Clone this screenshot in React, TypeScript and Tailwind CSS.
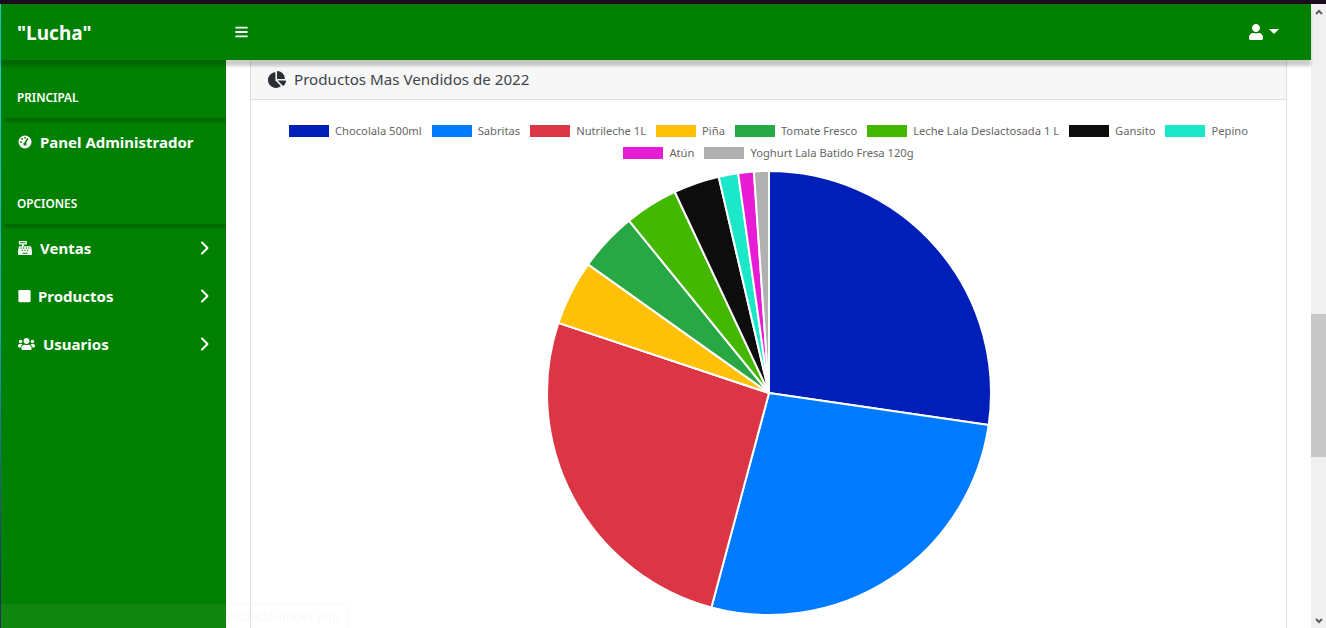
import { FaBars, FaCashRegister, FaChartPie, FaSquare, FaUser, FaUsers } from "react-icons/fa";

const slices = [
  { label: "Chocolala 500ml", color: "#001fb8", end: 98.26 },
  { label: "Sabritas", color: "#007bff", end: 195.04 },
  { label: "Nutrileche 1L", color: "#dc3545", end: 288.4 },
  { label: "Piña", color: "#ffc107", end: 305.4 },
  { label: "Tomate Fresco", color: "#28a745", end: 320.9 },
  { label: "Leche Lala Deslactosada 1 L", color: "#44b700", end: 334.9 },
  { label: "Gansito", color: "#0d0d0d", end: 346.9 },
  { label: "Pepino", color: "#1be7c9", end: 352 },
  { label: "Atún", color: "#e91cd6", end: 356.1 },
  { label: "Yoghurt Lala Batido Fresa 120g", color: "#b0b0b0", end: 360 },
];

const point = (deg: number, r: number, c: number) => {
  const a = (deg * Math.PI) / 180;
  return `${c + r * Math.sin(a)} ${c - r * Math.cos(a)}`;
};

function Pie() {
  const r = 222;
  const c = 223;
  let start = 0;
  return (
    <svg width="446" height="446" viewBox="0 0 446 446" className="block">
      {slices.map((s) => {
        const d = `M${c} ${c} L${point(start, r, c)} A${r} ${r} 0 ${s.end - start > 180 ? 1 : 0} 1 ${point(s.end, r, c)} Z`;
        start = s.end;
        return <path key={s.label} d={d} fill={s.color} stroke="#ffffff" strokeWidth="2" strokeLinejoin="round" />;
      })}
    </svg>
  );
}

function Legend({ item }: { item: (typeof slices)[number] }) {
  return (
    <div className="flex items-center gap-1.5">
      <span className="h-3 w-10 shrink-0" style={{ backgroundColor: item.color }} />
      <span className="text-[11.2px] leading-[22px] text-[#666666]">{item.label}</span>
    </div>
  );
}

function Heading({ children }: { children: string }) {
  return (
    <div className="ml-1 flex h-[58px] items-end pb-[13px] pl-[12px] text-[11.8px] font-semibold leading-[16px] text-white shadow-[0_4px_2px_rgba(0,0,0,0.18)]">
      {children}
    </div>
  );
}

function Gauge() {
  return (
    <svg width="14" height="14" viewBox="0 0 14 14" className="shrink-0">
      <circle cx="7" cy="7" r="6.5" fill="#ffffff" />
      <path d="M7 8.2 L9.8 3.4" stroke="#008000" strokeWidth="1.6" />
      <circle cx="3" cy="7" r="0.9" fill="#008000" />
      <circle cx="4.2" cy="4" r="0.9" fill="#008000" />
      <circle cx="7" cy="2.8" r="0.9" fill="#008000" />
      <circle cx="7" cy="9" r="1.6" fill="#008000" />
    </svg>
  );
}

function Chevron() {
  return (
    <svg width="10" height="14" viewBox="0 0 10 14" className="shrink-0">
      <path d="M2 1.5 L7.5 7 L2 12.5" fill="none" stroke="#ffffff" strokeWidth="2" strokeLinecap="round" strokeLinejoin="round" />
    </svg>
  );
}

function Item({ icon, label, gap, arrow = true }: { icon: React.ReactNode; label: string; gap: string; arrow?: boolean }) {
  return (
    <div className={`flex h-12 items-center pl-[17px] pr-[16px] text-[15px] font-bold text-white ${gap}`}>
      {icon}
      <span className="flex-1">{label}</span>
      {arrow && <Chevron />}
    </div>
  );
}

export default function App() {
  return (
    <div className="relative flex h-screen flex-col overflow-hidden bg-white font-['Noto_Sans','Open_Sans',sans-serif]">
      <div className="h-1 shrink-0 bg-[#1b0d1f]" />
      <div className="flex min-h-0 flex-1">
        <div className="w-px shrink-0 bg-gradient-to-b from-[#1fd0c8] via-[#1fa8b0] to-[#1a2050]" />
        <div className="flex min-w-0 flex-1 flex-col">
          <header className="z-10 flex h-14 shrink-0 items-center bg-[#008000] shadow-[0_6px_3px_rgba(0,0,0,0.2)]">
            <div className="w-[225px] pl-4 pt-[2px] text-[19px] font-bold text-white">"Lucha"</div>
            <FaBars className="ml-[9px] h-[14px] w-[13px] text-white" />
            <div className="ml-auto flex items-center gap-[5px] pr-[32px] text-white">
              <FaUser className="h-[16px] w-[16px]" />
              <span className="mb-[2px] h-0 w-0 border-x-[5px] border-t-[5px] border-x-transparent border-t-white" />
            </div>
          </header>
          <div className="flex min-h-0 flex-1">
            <aside className="w-[225px] shrink-0 overflow-hidden bg-[#008000]">
              <Heading>PRINCIPAL</Heading>
              <Item icon={<Gauge />} label="Panel Administrador" gap="gap-[8px]" arrow={false} />
              <Heading>OPCIONES</Heading>
              <Item icon={<FaCashRegister className="h-[14px] w-[14px]" />} label="Ventas" gap="gap-[8px]" />
              <Item icon={<FaSquare className="h-[14px] w-[13px]" />} label="Productos" gap="gap-[7px]" />
              <Item icon={<FaUsers className="h-[14px] w-[17px]" />} label="Usuarios" gap="gap-[8px]" />
            </aside>
            <main className="min-w-0 flex-1 pl-6 pr-6">
              <section className="h-[640px] border-x border-[#dfdfdf]">
                <div className="flex h-[40px] items-center gap-2 border-b border-[#dfdfdf] bg-[#f7f7f7] pl-[17px] text-[15.15px] text-[#3e444a]">
                  <FaChartPie className="h-[17px] w-[18px] text-[#2a2f36]" />
                  <span>Productos Mas Vendidos de 2022</span>
                </div>
                <div className="flex flex-col items-center pt-[20px]">
                  <div className="flex w-[1000px] flex-wrap justify-center gap-x-[10px]">
                    {slices.map((s) => (
                      <Legend key={s.label} item={s} />
                    ))}
                  </div>
                  <div className="mt-[6px]">
                    <Pie />
                  </div>
                </div>
              </section>
            </main>
          </div>
        </div>
        <div className="flex w-[15px] shrink-0 flex-col bg-[#f0f0f0]">
          <div className="flex h-[15px] items-center justify-center">
            <svg width="8" height="6" viewBox="0 0 8 6"><path d="M1 5 L4 2 L7 5" fill="none" stroke="#606060" strokeWidth="2" /></svg>
          </div>
          <div className="mt-[295px] h-[143px] bg-[#c8c8c8]" />
          <div className="flex flex-1 items-end justify-center pb-[4px]">
            <svg width="8" height="6" viewBox="0 0 8 6"><path d="M1 1 L4 4 L7 1" fill="none" stroke="#606060" strokeWidth="2" /></svg>
          </div>
        </div>
      </div>
      <div className="absolute bottom-0 left-0 z-20 flex h-[24px] w-[349px] items-center overflow-hidden border-r border-t border-[rgba(0,0,0,0.02)] bg-[rgba(255,255,255,0.06)] pl-[12px] text-[12px] text-[rgba(0,0,0,0.05)]">
        localhost/Abarrotes_Lucha/PanelAdministrador/index.php
      </div>
    </div>
  );
}
